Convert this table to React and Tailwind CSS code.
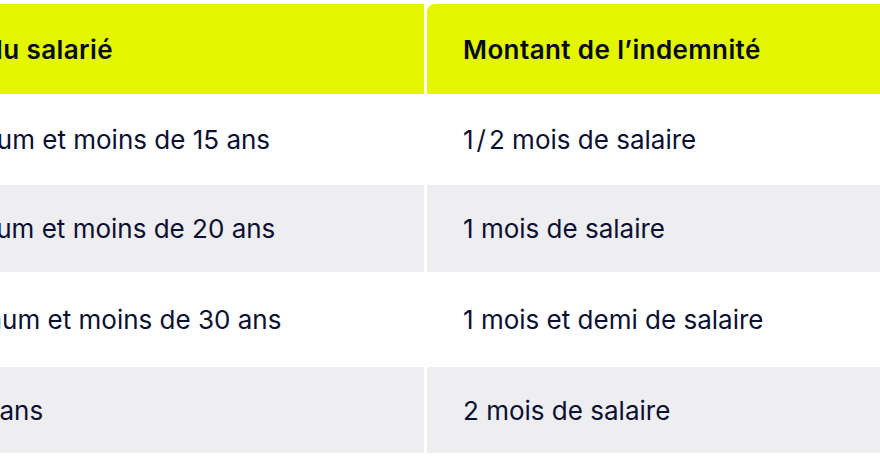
const rows = [
  { left: '10 ans minimum et moins de 15 ans', right: <>1<span className="mx-[3px]">/</span>2 mois de salaire</>, bg: 'bg-white', h: 'h-[91px]' },
  { left: '15 ans minimum et moins de 20 ans', right: '1 mois de salaire', bg: 'bg-[#eeedef]', h: 'h-[87px]' },
  { left: '20 ans minimum et moins de 30 ans', right: '1 mois et demi de salaire', bg: 'bg-white', h: 'h-[95px]' },
  { left: 'Au moins 30 ans', right: '2 mois de salaire', bg: 'bg-[#eeedef]', h: 'h-[86px]' },
];

export default function App() {
  return (
    <div className="w-[880px] h-[457px] overflow-hidden bg-white pt-1 text-[#0b1033]" style={{ fontFamily: 'Inter, "Noto Sans", sans-serif' }}>
      <div className="-ml-[198px] w-[1240px]">
        <div className="flex gap-[3px] h-[90px]">
          <div className="w-[622px] bg-[#e4f500] rounded-tl-lg flex items-center pl-[30px] text-[26px] tracking-[0.4px] font-semibold text-[#050a1c]">
            Ancienneté du salarié
          </div>
          <div className="flex-1 bg-[#e4f500] rounded-tl-lg flex items-center pl-9 text-[26px] tracking-[0.4px] font-semibold text-[#050a1c]">
            Montant de l’indemnité
          </div>
        </div>
        {rows.map((r, i) => (
          <div key={i} className={`flex gap-[3px] ${r.h}`}>
            <div className={`w-[622px] ${r.bg} flex items-center pl-9 text-[26px]`}>{r.left}</div>
            <div className={`flex-1 ${r.bg} flex items-center pl-9 text-[26px]`}>{r.right}</div>
          </div>
        ))}
      </div>
    </div>
  );
}
